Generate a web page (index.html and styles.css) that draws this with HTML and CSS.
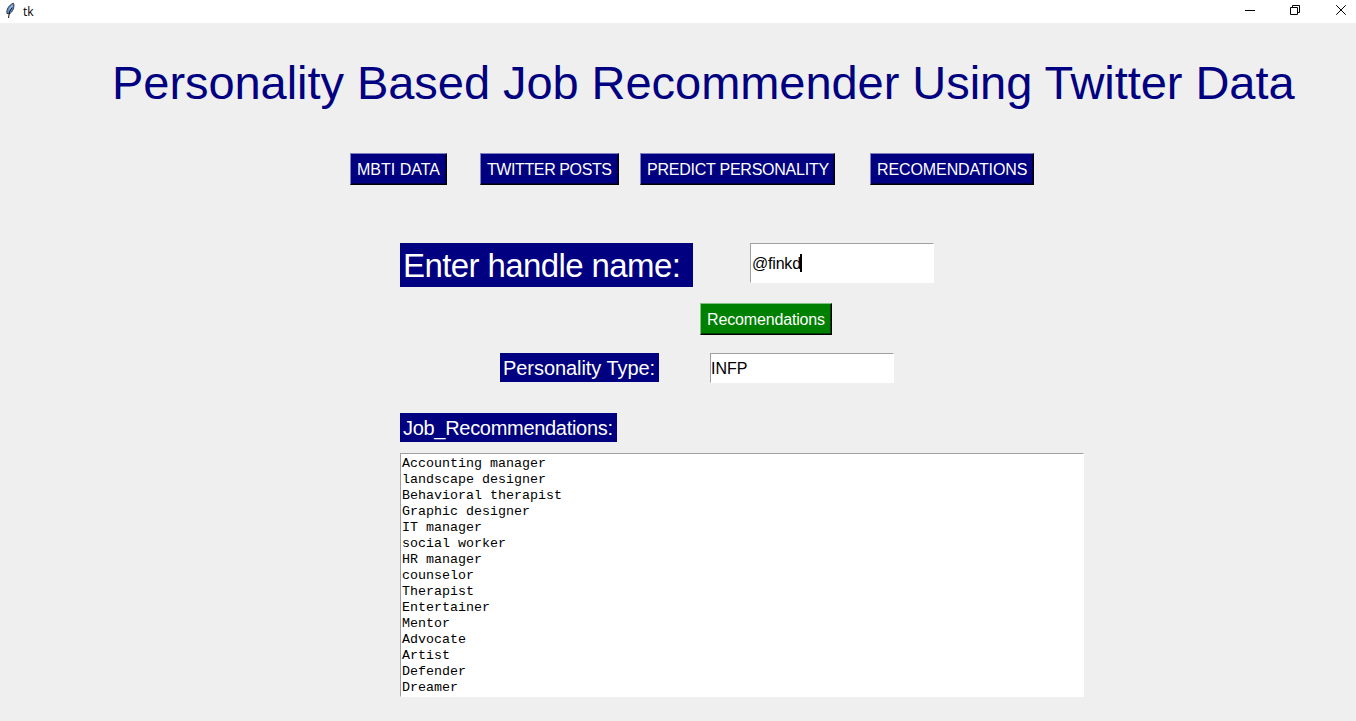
FILE: index.html
```html
<!DOCTYPE html>
<html lang="en">
<head>
<meta charset="utf-8">
<title>tk</title>
<link rel="stylesheet" href="styles.css">
</head>
<body>
<div class="window">
  <header class="titlebar">
    <svg class="feather" width="16" height="18" viewBox="0 0 16 18">
      <path d="M4 12.500C3.300 9 5.500 4 10.500 2.300C11.800 5 10 11.500 6 12.800Z" fill="#5d94d8" stroke="#333" stroke-width="1"/>
      <path d="M9.500 4.500L6.500 8.500" stroke="#a9cdf5" stroke-width="1.200" fill="none"/>
      <path d="M9 6.500Q5.800 10 5.500 17" stroke="#111" stroke-width="1" fill="none"/>
    </svg>
    <span class="caption">tk</span>
    <svg class="controls" width="106" height="22" viewBox="0 0 106 22" fill="none" stroke="#000">
      <path d="M0 10.500H10"/>
      <path d="M45.500 7.500H52.500V14.500H45.500ZM47.500 7.500V5.500H54.500V12.500H52.500"/>
      <path d="M91.200 5.200L100.800 14.800M100.800 5.200L91.200 14.800" stroke-width="1"/>
    </svg>
  </header>
  <main class="content">
    <h1 class="heading"><span>Personality Based Job Recommender Using Twitter Data</span></h1>
    <nav class="nav">
      <button class="btn mbti"><span>MBTI DATA</span></button>
      <button class="btn posts"><span>TWITTER POSTS</span></button>
      <button class="btn predict"><span>PREDICT PERSONALITY</span></button>
      <button class="btn recs"><span>RECOMENDATIONS</span></button>
    </nav>
    <div class="row handle-row">
      <div class="label label-large"><span>Enter handle name:</span></div>
      <div class="field handle-field"><span>@finkd</span><i class="caret"></i></div>
    </div>
    <div class="row action-row">
      <button class="btn go"><span>Recomendations</span></button>
    </div>
    <div class="row type-row">
      <div class="label label-type"><span>Personality Type:</span></div>
      <div class="field type-field"><span>INFP</span></div>
    </div>
    <div class="row jobs-row">
      <div class="label label-jobs"><span>Job_Recommendations:</span></div>
    </div>
    <pre class="jobs">Accounting manager
landscape designer
Behavioral therapist
Graphic designer
IT manager
social worker
HR manager
counselor
Therapist
Entertainer
Mentor
Advocate
Artist
Defender
Dreamer</pre>
  </main>
</div>
</body>
</html>
```
FILE: styles.css
```css
* { box-sizing: border-box; }
body { margin: 0; background: #efefef; font-family: "Liberation Sans", Arial, sans-serif; }
.window { width: 1356px; height: 721px; overflow: hidden; }
.titlebar { display: flex; height: 23px; background: #fff; padding: 0 10px 0 3px; }
.feather { margin-top: 1px; }
.caption { font: 12px/23px "Open Sans", sans-serif; margin-left: 4px; }
.controls { margin-left: auto; margin-right: -5px; }
.content { display: flex; flex-direction: column; }
.heading { margin: 30px 0 0 112px; height: 60px; font-weight: 400; font-size: 47px; line-height: 60px; letter-spacing: -0.05px; color: #000080; white-space: nowrap; }
.nav { display: flex; margin: 40px 0 0 350px; }
.btn { height: 32px; padding: 1px 0 0 6px; margin: 0; border: 1px solid; border-color: #8080c0 #000 #000 #8080c0; box-shadow: inset -1px -1px #000040; background: #000080; color: #fff; font: 16px/29px "Liberation Sans", Arial, sans-serif; text-align: left; white-space: nowrap; }
.mbti { width: 97px; }
.posts { width: 139px; margin-left: 33px; letter-spacing: -0.4px; }
.predict { width: 195px; margin-left: 21px; letter-spacing: -0.24px; }
.recs { width: 164px; margin-left: 35px; letter-spacing: -0.1px; }
.row { display: flex; align-items: flex-start; }
.label { background: #000080; color: #fff; padding-left: 3px; white-space: nowrap; }
.field { display: flex; align-items: center; width: 184px; padding: 2px 0 0 1px; background: #fff; border: 1px solid #fff; border-top-color: #a0a0a0; border-left-color: #a0a0a0; font-size: 16px; color: #000; }
.handle-row { margin: 58px 0 0 400px; height: 44px; }
.label-large { width: 293px; height: 44px; font-size: 33px; line-height: 45px; letter-spacing: -0.6px; }
.handle-field { margin-left: 57px; height: 40px; letter-spacing: -0.2px; }
.caret { width: 2px; height: 18px; margin: 0 0 2px -1px; background: #000; }
.action-row { margin: 16px 0 0 700px; }
.go { width: 132px; background: #008000; border-color: #80c080 #000 #000 #80c080; box-shadow: inset -1px -1px #004000; letter-spacing: -0.15px; }
.type-row { margin: 18px 0 0 500px; height: 30px; }
.label-type { width: 159px; height: 29px; font-size: 20px; line-height: 30px; letter-spacing: -0.06px; }
.type-field { margin-left: 51px; height: 30px; padding-left: 0; }
.jobs-row { margin: 30px 0 0 400px; }
.label-jobs { width: 217px; height: 29px; font-size: 20px; line-height: 30px; letter-spacing: -0.3px; }
.jobs { margin: 11px 0 0 400px; width: 684px; height: 244px; padding: 2px 1px 0; background: #fff; border: 1px solid #fff; border-top-color: #a0a0a0; border-left-color: #a0a0a0; font: 13.333px/16px "Liberation Mono", "Courier New", monospace; color: #000; }
```
